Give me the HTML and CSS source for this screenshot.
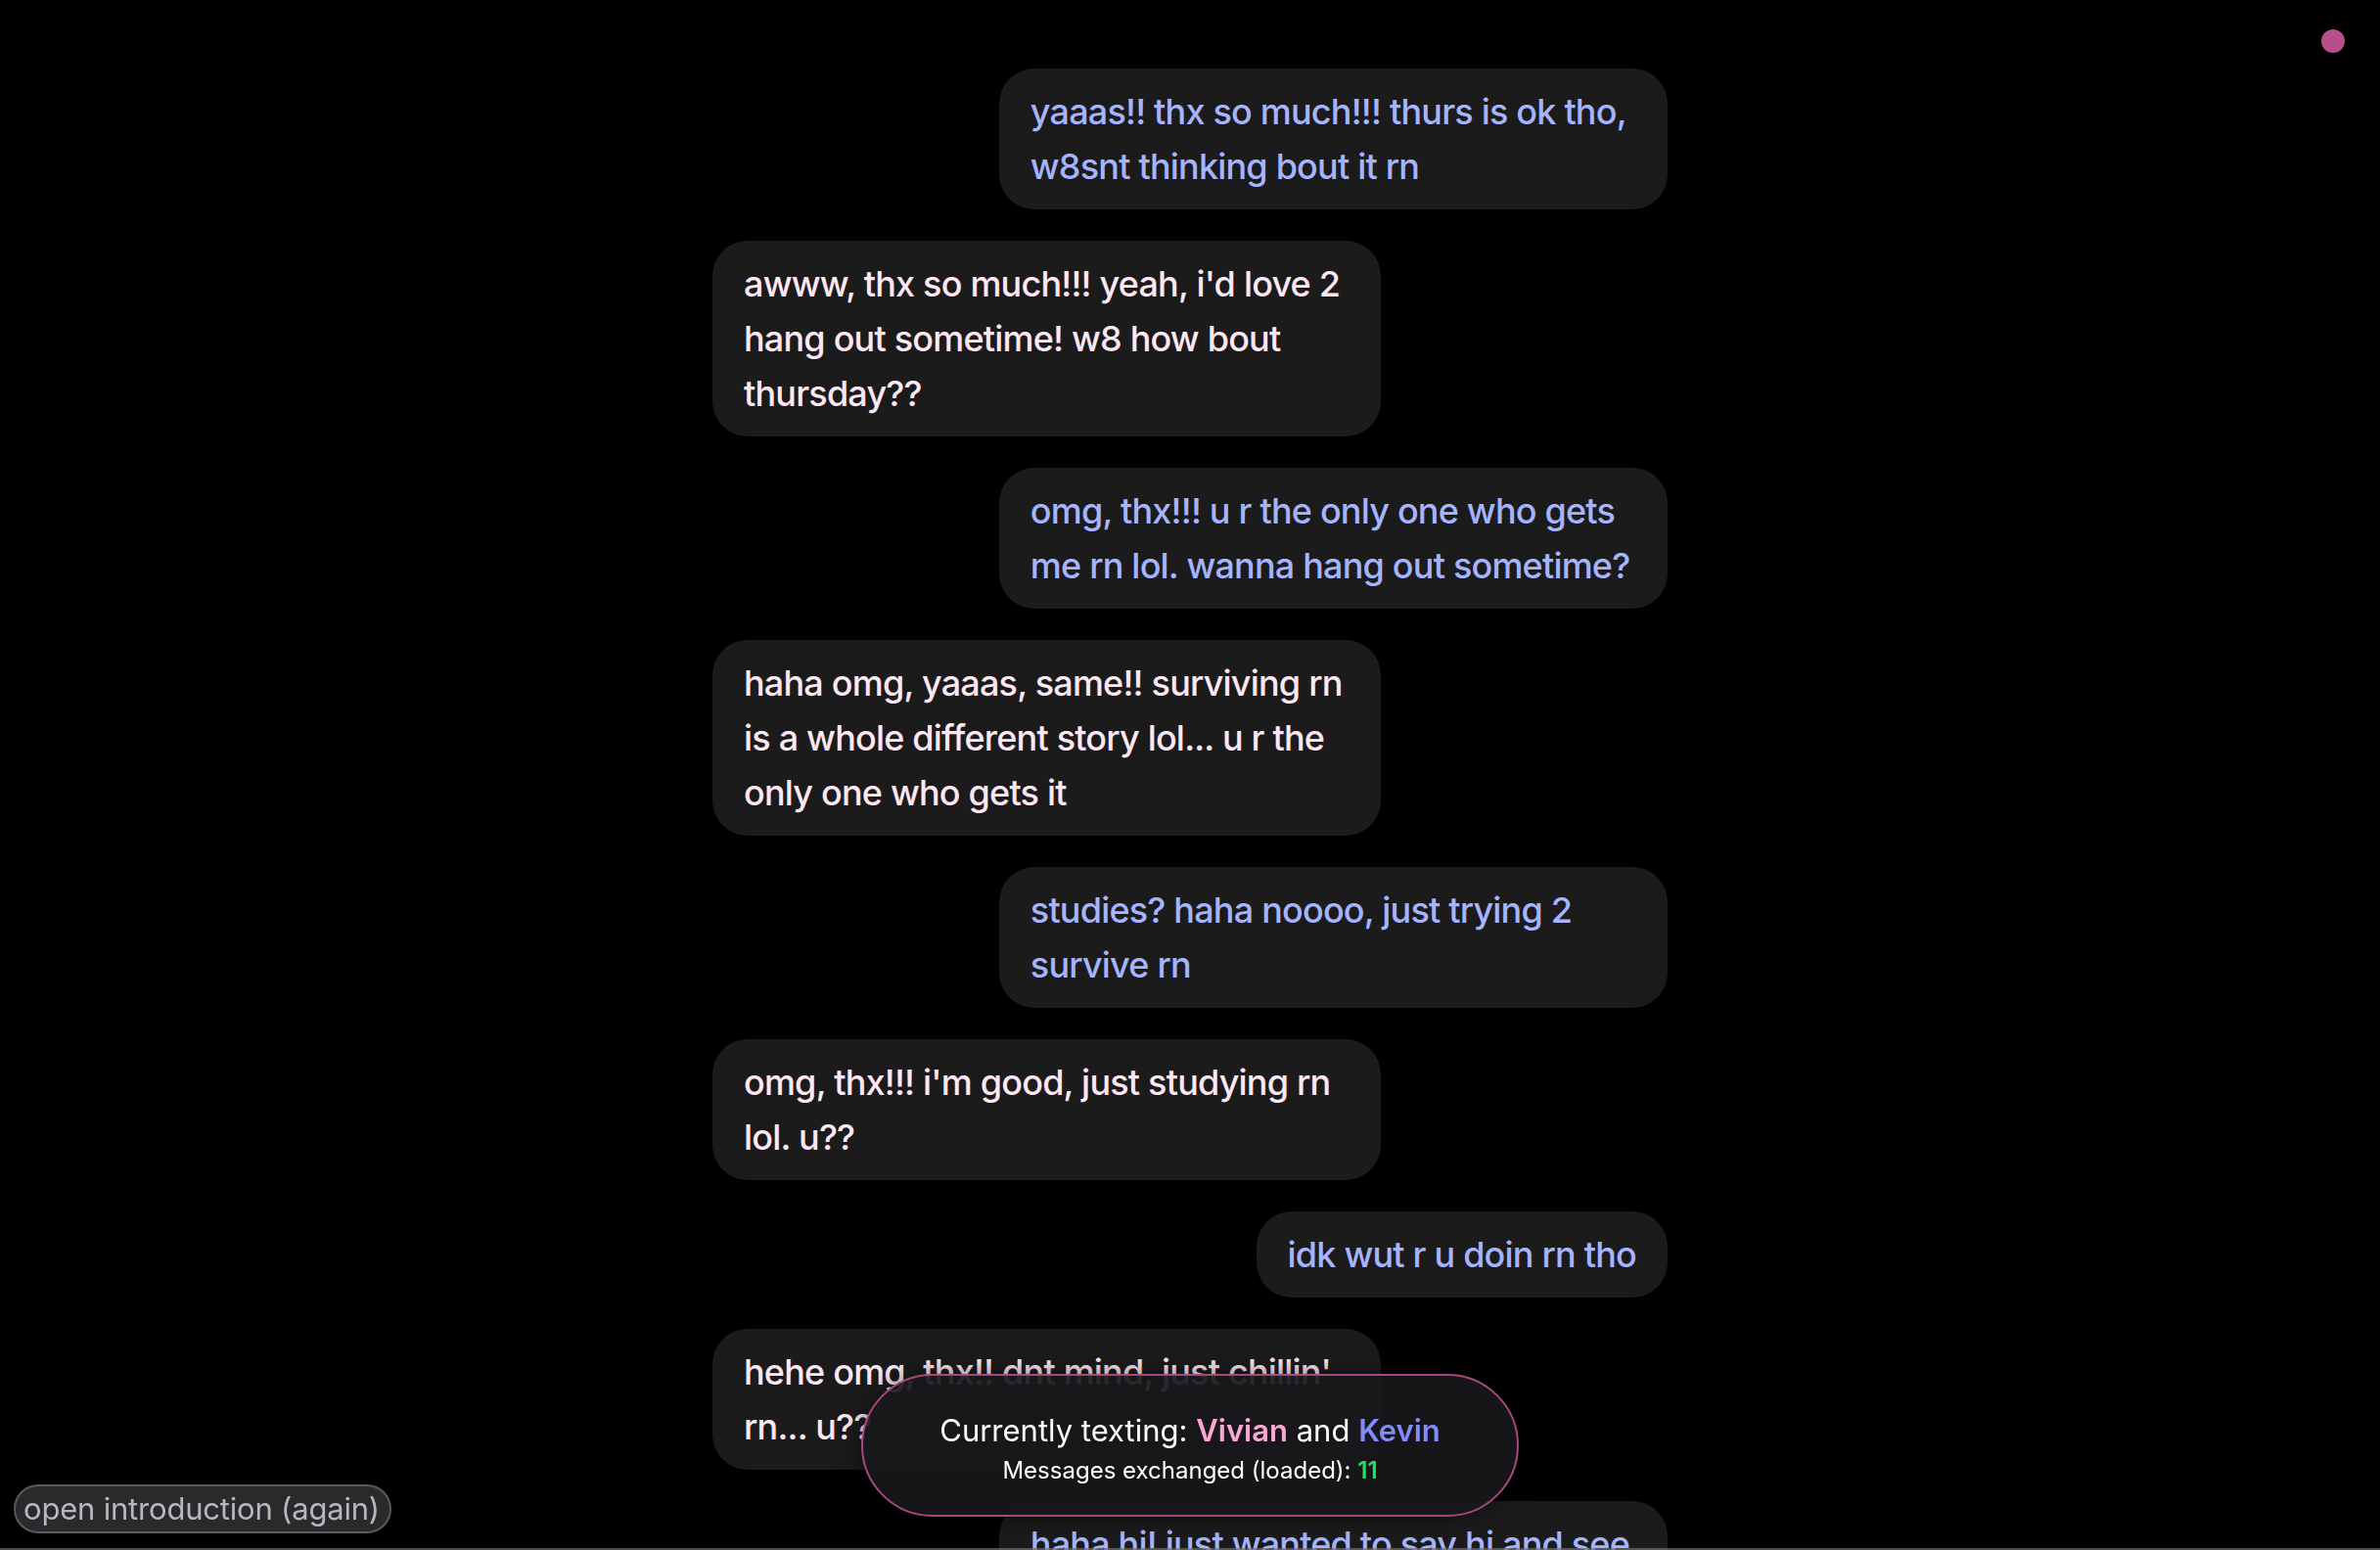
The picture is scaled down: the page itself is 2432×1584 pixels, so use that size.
FILE: index.html
```html
<!DOCTYPE html>
<html lang="en">
<head>
<meta charset="utf-8">
<title>Chat</title>
<link rel="stylesheet" href="styles.css">
</head>
<body>
<div class="status-dot"></div>
<main class="chat">
  <div class="msg kevin">yaaas!! thx so much!!! thurs is ok tho, w8snt thinking bout it rn</div>
  <div class="msg vivian">awww, thx so much!!! yeah, i'd love 2 hang out sometime! w8 how bout thursday??</div>
  <div class="msg kevin">omg, thx!!! u r the only one who gets me rn lol. wanna hang out sometime?</div>
  <div class="msg vivian">haha omg, yaaas, same!! surviving rn is a whole different story lol... u r the only one who gets it</div>
  <div class="msg kevin">studies? haha noooo, just trying 2 survive rn</div>
  <div class="msg vivian">omg, thx!!! i'm good, just studying rn lol. u??</div>
  <div class="msg kevin">idk wut r u doin rn tho</div>
  <div class="msg vivian">hehe omg, thx!! dnt mind, just chillin' rn... u??</div>
  <div class="msg kevin">haha hi! just wanted to say hi and see how ur doing, u look cute 2day</div>
</main>
<div class="status">
  <div class="status-main">Currently texting: <span class="name-v">Vivian</span> and <span class="name-k">Kevin</span></div>
  <div class="status-sub">Messages exchanged (loaded): <span class="count">11</span></div>
</div>
<button class="intro-btn">open introduction (again)</button>
<div class="bottom-bar"></div>
</body>
</html>
```
FILE: styles.css
```css
html, body {
  margin: 0;
  padding: 0;
  background: #000;
  height: 100%;
  overflow: hidden;
}
body {
  font-family: Inter, "Noto Sans", sans-serif;
  color: #fff;
}
.chat {
  width: 976px;
  margin: 0 auto;
  padding-top: 70px;
  display: flex;
  flex-direction: column;
  gap: 32px;
}
.msg {
  max-width: 70%;
  box-sizing: border-box;
  padding: 16px 32px;
  border-radius: 36px;
  background: #1b1b1c;
  font-size: 36px;
  font-weight: 500;
  line-height: 56px;
  letter-spacing: -0.8px;
}
.kevin {
  align-self: flex-end;
  color: #a5b4fc;
}
.vivian {
  align-self: flex-start;
  color: #fce7f3;
}
.status-dot {
  position: fixed;
  top: 30px;
  right: 36px;
  width: 24px;
  height: 24px;
  border-radius: 50%;
  background: #b84f8a;
}
.status {
  position: fixed;
  left: 50%;
  bottom: 34px;
  transform: translateX(-50%);
  width: 672px;
  height: 146px;
  box-sizing: border-box;
  border: 2px solid #a8477a;
  border-radius: 73px;
  background: rgba(24, 24, 27, 0.92);
  box-shadow: 0 0 24px rgba(0, 0, 0, 0.5);
  display: flex;
  flex-direction: column;
  align-items: center;
  justify-content: center;
  gap: 6px;
  padding-top: 6px;
}
.status-main {
  font-size: 31px;
  line-height: 40px;
  color: #fff;
}
.status-sub {
  font-size: 24px;
  line-height: 30px;
  color: #fff;
}
.name-v {
  color: #f9a8d4;
  font-weight: 600;
}
.name-k {
  color: #818cf8;
  font-weight: 600;
}
.count {
  color: #22e06a;
  font-weight: 600;
}
.intro-btn {
  position: fixed;
  left: 14px;
  bottom: 17px;
  height: 50px;
  padding: 0 10px 0 8px;
  border: 2px solid #5a5a5e;
  border-radius: 25px;
  background: #2a2a2d;
  color: #b8b8bc;
  font-family: Inter, "Noto Sans", sans-serif;
  font-size: 31px;
  letter-spacing: -0.2px;
  line-height: 44px;
}
.bottom-bar {
  position: fixed;
  left: 0;
  right: 0;
  bottom: 0;
  height: 2px;
  background: rgba(110, 110, 115, 0.7);
}
```
